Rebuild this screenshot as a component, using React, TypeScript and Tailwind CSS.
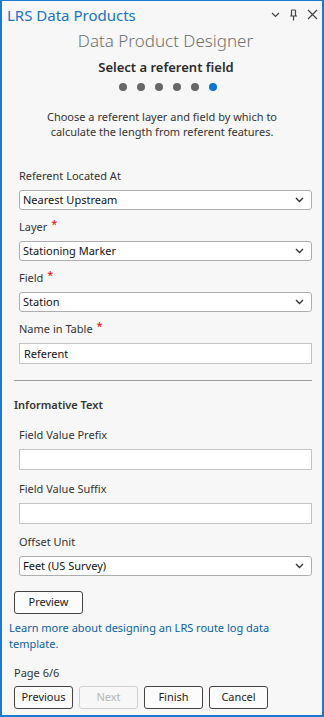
import React from "react";

const font = { fontFamily: '"Noto Sans", "Open Sans", Arial, sans-serif' };

function Chevron() {
  return (
    <svg width="9" height="6" viewBox="0 0 9 6" className="shrink-0">
      <path d="M1 1 L4.5 4.5 L8 1" fill="none" stroke="#333" strokeWidth="1.4" />
    </svg>
  );
}

function Label({ text, required }: { text: string; required?: boolean }) {
  return (
    <div className="h-4 leading-4 text-[11px] text-[#333] pl-[17px]">
      {text}
      {required && <span className="text-[#e00] ml-[4px] relative -top-[3px]">*</span>}
    </div>
  );
}

function Select({ value }: { value: string }) {
  return (
    <div className="ml-[17px] mr-[10px] mt-[6px] h-5 bg-white border border-[#adadad] rounded-[3px] flex items-center justify-between pl-[3px] pr-[7px] text-[11px] text-[#111]">
      <span className="leading-4">{value}</span>
      <Chevron />
    </div>
  );
}

function Input({ value }: { value?: string }) {
  return (
    <div className="ml-[17px] mr-[10px] mt-[6px] h-[21px] bg-white border border-[#c4c4c4] flex items-center pl-[4px] text-[11px] text-[#111]">
      <span className="leading-4">{value}</span>
    </div>
  );
}

function Btn({ text, disabled, w = "w-[59px]" }: { text: string; disabled?: boolean; w?: string }) {
  return (
    <div
      className={`${w} h-[23px] rounded-[3px] border flex items-center justify-center text-[11px] ${
        disabled ? "border-[#cfcfcf] text-[#b5b5b5] bg-[#f7f7f7]" : "border-[#444] text-[#222] bg-[#fcfcfc]"
      }`}
    >
      {text}
    </div>
  );
}

export default function App() {
  return (
    <div style={font} className="w-[324px] h-[717px] bg-[#f7f7f7] border-2 border-[#1a7bd0] border-t-[1px] border-b-[2px] flex flex-col overflow-hidden">
      {/* title bar */}
      <div className="h-[27px] shrink-0 flex items-center justify-between pl-[5px] pr-[4px]">
        <span className="text-[15px] text-[#1a73c4] leading-5">LRS Data Products</span>
        <div className="flex items-center gap-[9px] text-[#444]">
          <svg width="9" height="6" viewBox="0 0 9 6">
            <path d="M1 1 L4.5 4.5 L8 1" fill="none" stroke="#444" strokeWidth="1.2" />
          </svg>
          <svg width="9" height="12" viewBox="0 0 9 12">
            <path d="M2.5 1 V7 M6.5 1 V7 M2.5 1 H6.5 M1 7 H8 M4.5 7 V11.5" fill="none" stroke="#444" strokeWidth="1.2" />
          </svg>
          <svg width="11" height="11" viewBox="0 0 11 11">
            <path d="M1 1 L10 10 M10 1 L1 10" fill="none" stroke="#444" strokeWidth="1.2" />
          </svg>
        </div>
      </div>

      <div className="h-[26px] shrink-0 flex items-center justify-center pl-[7px] text-[17px] font-light text-[#707070] leading-6">
        Data Product Designer
      </div>

      <div className="mt-[5px] h-[18px] shrink-0 flex items-center justify-center pl-[8px] text-[13px] font-semibold text-[#2b2b2b]">
        Select a referent field
      </div>

      <div className="mt-[6px] flex justify-center gap-[10px] h-[8px] shrink-0 pl-[12px]">
        {[0, 1, 2, 3, 4].map((i) => (
          <div key={i} className="w-[8px] h-[8px] rounded-full bg-[#686868]" />
        ))}
        <div className="w-[8px] h-[8px] rounded-full bg-[#0a78d2]" />
      </div>

      <div className="mt-[18px] text-center text-[11px] leading-[15px] text-[#333]">
        Choose a referent layer and field by which to
        <br />
        calculate the length from referent features.
      </div>

      <div className="mt-[29px]">
        <Label text="Referent Located At" />
        <Select value="Nearest Upstream" />
      </div>
      <div className="mt-[9px]">
        <Label text="Layer" required />
        <Select value="Stationing Marker" />
      </div>
      <div className="mt-[9px]">
        <Label text="Field" required />
        <Select value="Station" />
      </div>
      <div className="mt-[9px]">
        <Label text="Name in Table" required />
        <Input value="Referent" />
      </div>

      <div className="ml-[12px] mr-[10px] mt-[16px] h-px bg-[#9a9a9a] shrink-0" />

      <div className="mt-[16px] px-[12px] h-4 leading-4 text-[11px] font-semibold text-[#333]">Informative Text</div>

      <div className="mt-[14px]">
        <Label text="Field Value Prefix" />
        <Input />
      </div>
      <div className="mt-[11px]">
        <Label text="Field Value Suffix" />
        <Input />
      </div>
      <div className="mt-[10px]">
        <Label text="Offset Unit" />
        <Select value="Feet (US Survey)" />
      </div>

      <div className="mt-[15px] px-[12px]">
        <Btn text="Preview" w="w-[69px]" />
      </div>

      <div className="mt-[6px] px-[7px] text-[11px] leading-4 text-[#0a5fa8]">
        Learn more about designing an LRS route log data
        <br />
        template.
      </div>

      <div className="mt-[13px] px-[12px] h-4 leading-4 text-[11px] text-[#333]">Page 6/6</div>

      <div className="mt-[5px] px-[12px] flex gap-[6px]">
        <Btn text="Previous" />
        <Btn text="Next" disabled />
        <Btn text="Finish" />
        <Btn text="Cancel" />
      </div>
    </div>
  );
}
